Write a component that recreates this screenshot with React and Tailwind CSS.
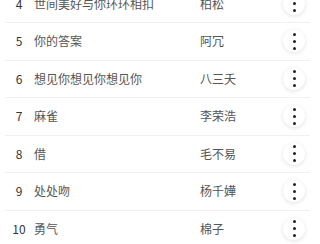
import React from "react";

const rows = [
  ["4", "世间美好与你环环相扣", "柏松"],
  ["5", "你的答案", "阿冗"],
  ["6", "想见你想见你想见你", "八三夭"],
  ["7", "麻雀", "李荣浩"],
  ["8", "借", "毛不易"],
  ["9", "处处吻", "杨千嬅"],
  ["10", "勇气", "棉子"],
];

export default function App() {
  return (
    <div
      className="w-[320px] h-[244px] overflow-hidden bg-white"
      style={{ fontFamily: '"Noto Sans CJK SC", "Noto Sans", sans-serif' }}
    >
      <div className="mt-[-14.5px]">
        {rows.map(([n, t, a]) => (
          <div
            key={n}
            className="ml-[5px] mr-[10px] h-[37.5px] flex items-center border-b border-[#f0f0f0]"
          >
            <div className="w-[28px] text-center text-[12px] text-[#333]">{n}</div>
            <div className="w-[167px] pl-[1px] text-[12px] text-[#555] whitespace-nowrap">{t}</div>
            <div className="flex-1 text-[12px] text-[#555]">{a}</div>
            <div className="w-[22px] h-[22px] mr-[5px] rounded-full bg-white shadow-[0_1px_4px_rgba(0,0,0,0.12)] flex flex-col items-center justify-center gap-[4px]">
              <span className="w-[3px] h-[3px] rounded-full bg-[#222]" />
              <span className="w-[3px] h-[3px] rounded-full bg-[#222]" />
              <span className="w-[3px] h-[3px] rounded-full bg-[#222]" />
            </div>
          </div>
        ))}
      </div>
    </div>
  );
}
